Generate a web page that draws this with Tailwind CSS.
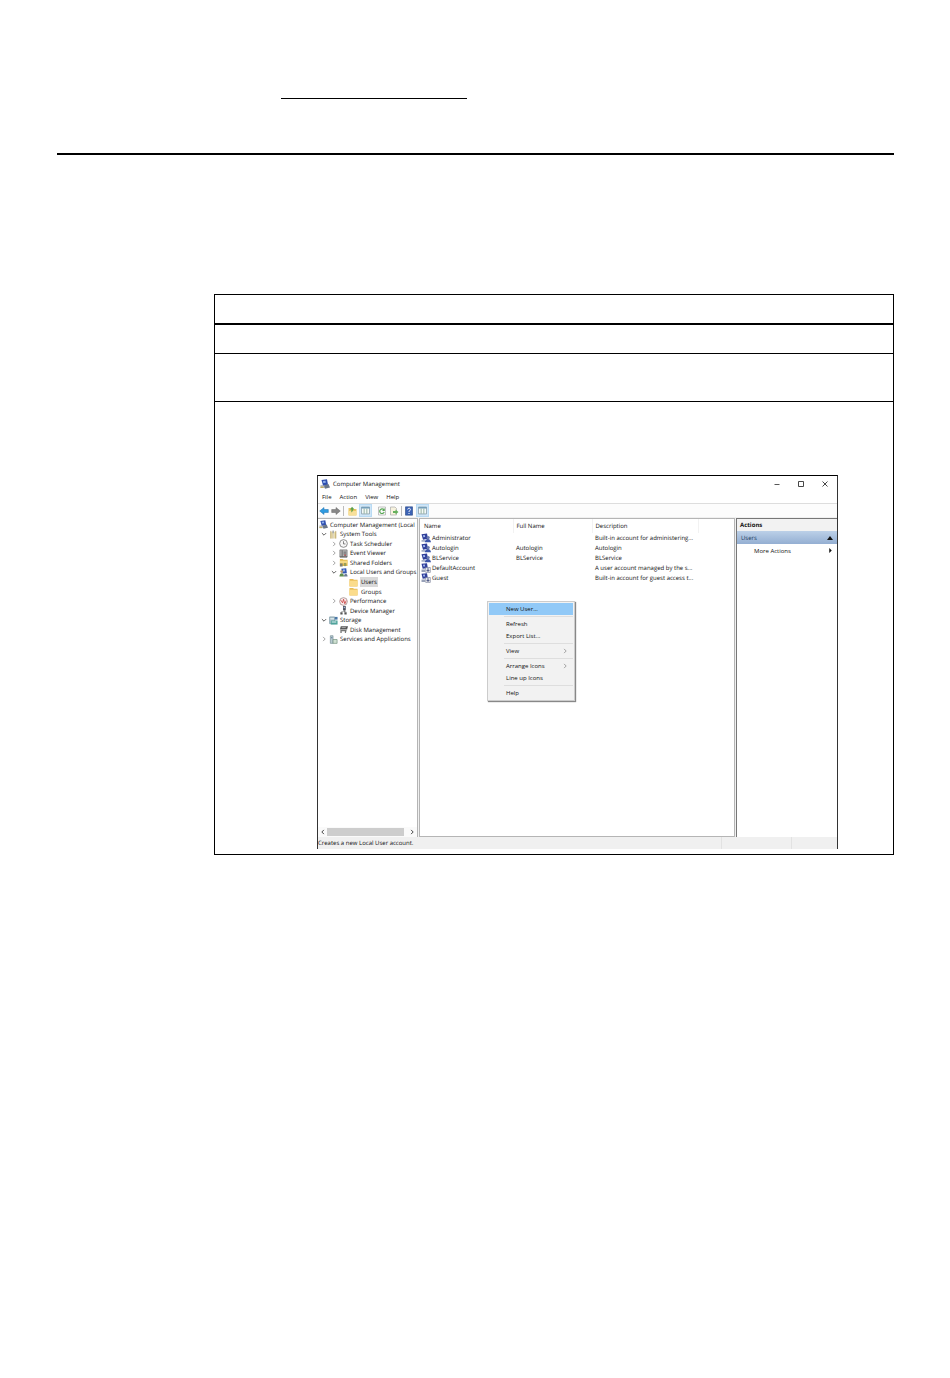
<!DOCTYPE html>
<html lang="en">
<head>
  <meta charset="UTF-8">
  <title>Computer Management</title>
  <script src="https://cdn.jsdelivr.net/npm/@tailwindcss/browser@4"></script>
</head>
<body class="bg-white min-h-screen text-[#111] font-['Open_Sans',sans-serif] text-[6px] leading-[10px] [text-rendering:geometricPrecision]">

  <!-- Shared icons -->
  <svg class="hidden">
    <symbol id="computer" viewBox="0 0 10 10">
      <path fill="#b9bfc9" d="M.5 6h5v3h-5z"/><path fill="#2f4fae" d="M1.500 1L7 .3l1 5.400L3 6.500z"/><path fill="#8fb1ec" d="M3 2l2.500-.3.300 2L3.300 4z"/>
      <path fill="#6a7687" d="M4 6.500l4.500-1.500L10 8.500 5 9.800z"/><path fill="#c5ad5c" d="M.5 7.500h3V9h-3z"/>
    </symbol>
    <symbol id="tools" viewBox="0 0 10 10">
      <path fill="#eadfae" d="M1.500 2h2.500v7.500H1.500zM5.500 2H8v7.500H5.500z"/><path fill="none" stroke="#b3985b" stroke-width=".8" d="M2 1v8.500M4.500 1.500v8M7.500 1v8.500"/><path fill="#8c98a8" d="M4 .5h1.200v3H4z"/>
    </symbol>
    <symbol id="clock" viewBox="0 0 10 10">
      <circle cx="5" cy="5" r="4.300" fill="#f7f7f7" stroke="#777" stroke-width=".9"/><path fill="none" stroke="#555" stroke-width=".8" d="M5 2.500V5.500h2.200"/>
    </symbol>
    <symbol id="event" viewBox="0 0 10 10">
      <path fill="#b6b6b6" stroke="#777" stroke-width=".8" d="M1 1h8v8H1z"/><path fill="none" stroke="#555" stroke-width=".9" d="M3.500 1.500v7M5 3.500h3M5 5.500h3M1 8.700h8"/><path fill="#a44" d="M6 6.200h1.500v1.500H6z"/>
    </symbol>
    <symbol id="shared" viewBox="0 0 10 10">
      <path fill="#e3b94f" d="M1 1h3l1 1h4.500v7H1z"/><path fill="#f5da88" d="M1 3h8.500v3H1z"/><path fill="#7b7f78" d="M1 6h3v3.500H1z"/><path fill="#9a9f58" d="M5.500 5.500H8V9H5.500z"/>
    </symbol>
    <symbol id="folder" viewBox="0 0 10 10">
      <path fill="#e8bd57" d="M.5 1H4.500l1 1h4v7.500h-9z"/><path fill="#fbdc8b" d="M.5 3h9v6.200h-9z"/>
    </symbol>
    <symbol id="groups" viewBox="0 0 10 10">
      <path fill="#3457b4" d="M2.500 .8l5.500-.4.700 5.400L4 6z"/><path fill="#a3c0ef" d="M4.500 1.800h2v2h-2z"/><circle cx="3" cy="4" r="1.500" fill="#b99b72"/><path fill="#5f8f50" d="M.5 9.500c0-5 5-5 5 0z"/><path fill="#6c7d95" d="M5.500 9.500c0-4 4-4 4 0z"/>
    </symbol>
    <symbol id="performance" viewBox="0 0 10 10">
      <circle cx="5" cy="5" r="4.300" fill="#fbeaea" stroke="#9c8585" stroke-width=".8"/><path fill="none" stroke="#c53e3e" stroke-width=".9" d="M2 3.500l2 3 1-4 1.500 5L8 4"/>
    </symbol>
    <symbol id="device" viewBox="0 0 10 10">
      <path fill="#4a4f5c" d="M4.500 0h3v5h-3z"/><path fill="#9fb5d8" d="M5.200 .8h1.500v1.600H5.200z"/><path fill="#777" d="M5.500 4.500h1V7h-1zM2.500 6h5.500v.8H2.500z"/><path fill="#555" d="M1.500 7h2.500v2.500H1.500zM6 7h2.500v2.500H6z"/>
    </symbol>
    <symbol id="storage" viewBox="0 0 10 10">
      <path fill="#b3c5cd" stroke="#6a8b99" stroke-width=".7" d="M.7 1h5.500v7.500H.7z"/><path fill="#4fa39b" d="M2 5h7.500v4.500H2z"/><path fill="#e4f1f4" d="M1.500 2.500h4v1h-4zM3 6.200h5v1H3z"/><path fill="#4977a6" d="M6.500 1h3v3h-3z"/>
    </symbol>
    <symbol id="disk" viewBox="0 0 10 10">
      <path fill="#555" d="M2 1.500h8L9 5H1z"/><path fill="#bbb" d="M3 2.500h4.500v.9H3z"/><path fill="#777" d="M1.500 5.500h7L7.700 9H6.500V7H3v2H1.500z"/>
    </symbol>
    <symbol id="services" viewBox="0 0 10 10">
      <path fill="#b9cbd1" stroke="#718a91" stroke-width=".7" d="M1.500 .8h3v8.500h-3z"/><path fill="#cfe0d2" stroke="#6a8b77" stroke-width=".7" d="M4.500 5h4.500v4.300H4.500z"/><path fill="#5a7698" d="M2.300 2.500h1.400v1H2.300z"/>
    </symbol>
    <symbol id="user" viewBox="0 0 10 10">
      <path fill="#303f9a" d="M.5 1.200L6 .6l1 5.200L2 6.700z"/><path fill="#a9bff0" d="M2 2.300l1.800-.3.300 2-1.700.3z"/><path fill="#a8b2c9" d="M.5 7H4v1.800H.5z"/><circle cx="7.200" cy="4.600" r="1.600" fill="#6b7cae"/><path fill="#3d55a8" d="M3.800 9.300c.5-4.300 5.600-4.300 6.200 0z"/>
    </symbol>
    <symbol id="disabled" viewBox="0 0 10 10">
      <path fill="#303f9a" d="M.5 .8L6 .3l.8 4.700L1.700 5.800z"/><path fill="#a9bff0" d="M2 1.800l1.800-.2.300 1.800-1.700.2z"/><path fill="#98a1b8" d="M.5 6.500H4V9H.5z"/><path fill="#f4f4f4" stroke="#6b7391" stroke-width=".6" d="M4.700 4.500h4.600v4.900H4.700z"/><path fill="none" stroke="#26346e" stroke-width=".9" d="M7 5.200v3M5.700 7L7 8.400 8.300 7"/>
    </symbol>
    <symbol id="panes" viewBox="0 0 10 10">
      <path fill="#f4f8f8" stroke="#7d929f" stroke-width=".8" d="M.5 1.200h9v7.600h-9z"/><path fill="#6e9bb8" d="M.5 1.200h9v1.600h-9z"/><path fill="none" stroke="#7fa38d" stroke-width=".9" d="M3.500 3v5.500M6.500 3v5.500"/>
    </symbol>
    <symbol id="right" viewBox="0 0 10 10"><path fill="none" stroke="#888" stroke-width="1.300" d="M3.500 1.500L7 5 3.500 8.500"/></symbol>
    <symbol id="scroll" viewBox="0 0 10 10"><path fill="none" stroke="#333" stroke-width="1.500" d="M3.500 1.500L7 5 3.500 8.500"/></symbol>
    <symbol id="down" viewBox="0 0 10 10"><path fill="none" stroke="#333" stroke-width="1.300" d="M1.500 3.500L5 7l3.500-3.500"/></symbol>
  </svg>

  <header class="pl-[57px] pr-14 pt-[98px]">
    <div class="ml-[224px] w-[186px] border-t border-black"></div>
    <hr class="mt-[54px] border-t-2 border-black">
  </header>

  <main class="mt-[139px] ml-[214px] mr-14 border border-black">
    <div class="h-7 border-b-2 border-black box-content"></div>
    <div class="h-7 border-b border-black box-content"></div>
    <div class="h-[47px] border-b border-black box-content"></div>

    <div class="pt-[73px] pb-[5px] pl-[102px] pr-[55px]">
      <!-- Computer Management window -->
      <section class="relative border border-b-0 border-[#333] border-t-black bg-white">
        <div class="flex items-center h-[15px] pl-[2px] pr-2">
          <svg class="size-[10px] mr-[3px]"><use href="#computer"/></svg>
          <h1>Computer Management</h1>
          <div class="ml-auto flex gap-[16px]">
            <button type="button" aria-label="Minimize"><svg class="size-2" viewBox="0 0 8 8"><path stroke="#444" stroke-width=".9" d="M1.500 4.500h5"/></svg></button>
            <button type="button" aria-label="Maximize"><svg class="size-2" viewBox="0 0 8 8"><path fill="none" stroke="#333" stroke-width=".9" d="M1.500 1.500h5v5h-5z"/></svg></button>
            <button type="button" aria-label="Close"><svg class="size-2" viewBox="0 0 8 8"><path stroke="#333" stroke-width=".9" d="M1.500 1.500l5 5M6.500 1.500l-5 5"/></svg></button>
          </div>
        </div>

        <nav class="flex items-center gap-2 h-[13px] pl-1 border-b border-[#ddd]">
          <button type="button">File</button>
          <button type="button">Action</button>
          <button type="button">View</button>
          <button type="button">Help</button>
        </nav>

        <div class="flex items-center h-[13px] pl-px bg-[#fcfcfc]">
          <button type="button" aria-label="Back"><svg class="size-[10px]" viewBox="0 0 10 10"><path fill="#2f9be0" stroke="#1d6eae" stroke-width=".5" d="M.7 5L5 1.500v2h4.300v3H5v2z"/></svg></button>
          <button type="button" aria-label="Forward" class="ml-[2px]"><svg class="size-[10px]" viewBox="0 0 10 10"><path fill="#888" stroke="#666" stroke-width=".5" d="M9.300 5L5 1.500v2H.7v3H5v2z"/></svg></button>
          <span class="w-px h-[10px] mx-[2px] bg-[#bbb]"></span>
          <button type="button" aria-label="Up one level" class="ml-px"><svg class="size-[10px]" viewBox="0 0 10 10"><path fill="#eac65f" d="M1.500 2h3l1 1h4v6.500h-8z"/><path fill="#f8e09a" d="M1.500 5h8v4h-8z"/><path fill="#5ba04c" d="M5 .8L7.500 3.500H6c0 2-1 2.500-2 3 .5-1 .5-2 .3-3H3z"/></svg></button>
          <button type="button" aria-label="Console tree" class="ml-[2px] px-px h-[13px] bg-[#cfe6f8] border border-[#b9daf3]"><svg class="size-[9px]"><use href="#panes"/></svg></button>
          <button type="button" aria-label="Refresh" class="ml-[5px]"><svg class="size-[10px]" viewBox="0 0 10 10"><path fill="#fafafa" stroke="#aaa" stroke-width=".7" d="M1.500 1h7v8h-7z"/><path fill="none" stroke="#58a755" stroke-width="1.200" d="M7 4a2.300 2.300 0 1 0 .2 2M7.200 2.500v2H5.500"/></svg></button>
          <button type="button" aria-label="Export list" class="ml-[2px]"><svg class="size-[10px]" viewBox="0 0 10 10"><path fill="#f8f3df" stroke="#aaa" stroke-width=".7" d="M1.500 1H6l1.500 1.500V9h-6z"/><path fill="#65b05c" d="M4 5h2.500V3.500L9.500 6 6.500 8.500V7H4z"/></svg></button>
          <span class="w-px h-[10px] mx-[2px] bg-[#bbb]"></span>
          <button type="button" aria-label="Help"><svg class="size-[10px]" viewBox="0 0 10 10"><path fill="#3b62b5" stroke="#294785" stroke-width=".6" d="M1.500 .8h7v8.400h-7z"/><path fill="none" stroke="#fff" stroke-width="1" d="M3.700 3.500c0-1.700 2.800-1.700 2.700 0C6.400 4.500 5 4.600 5 6M5 7v1"/></svg></button>
          <button type="button" aria-label="Action pane" class="ml-[2px] px-px h-[13px] bg-[#cfe6f8] border border-[#b9daf3]"><svg class="size-[9px]"><use href="#panes"/></svg></button>
        </div>

        <div class="flex h-[320px] pt-px bg-[#f0f0f0]">
          <!-- Console tree -->
          <aside class="flex flex-col w-[100px] pt-px shrink-0 bg-white border-t border-r border-[#b5b5b5]">
            <ul class="grid auto-rows-fr items-center h-[124px] whitespace-nowrap [&>li]:flex [&>li]:items-center [&>li]:gap-[2px]">
              <li class="pl-px"><svg class="size-[9px] shrink-0"><use href="#computer"/></svg>Computer Management (Local</li>
              <li class="pl-[3px]"><svg class="size-[6px]"><use href="#down"/></svg><svg class="size-[9px]"><use href="#tools"/></svg>System Tools</li>
              <li class="pl-[13px]"><svg class="size-[6px]"><use href="#right"/></svg><svg class="size-[9px]"><use href="#clock"/></svg>Task Scheduler</li>
              <li class="pl-[13px]"><svg class="size-[6px]"><use href="#right"/></svg><svg class="size-[9px]"><use href="#event"/></svg>Event Viewer</li>
              <li class="pl-[13px]"><svg class="size-[6px]"><use href="#right"/></svg><svg class="size-[9px]"><use href="#shared"/></svg>Shared Folders</li>
              <li class="pl-[13px]"><svg class="size-[6px]"><use href="#down"/></svg><svg class="size-[9px]"><use href="#groups"/></svg>Local Users and Groups</li>
              <li class="pl-[31px]"><svg class="size-[9px]"><use href="#folder"/></svg><span class="bg-[#d9d9d9] px-px">Users</span></li>
              <li class="pl-[31px]"><svg class="size-[9px]"><use href="#folder"/></svg><span class="px-px">Groups</span></li>
              <li class="pl-[13px]"><svg class="size-[6px]"><use href="#right"/></svg><svg class="size-[9px]"><use href="#performance"/></svg>Performance</li>
              <li class="pl-[21px]"><svg class="size-[9px]"><use href="#device"/></svg>Device Manager</li>
              <li class="pl-[3px]"><svg class="size-[6px]"><use href="#down"/></svg><svg class="size-[9px]"><use href="#storage"/></svg>Storage</li>
              <li class="pl-[21px]"><svg class="size-[9px]"><use href="#disk"/></svg>Disk Management</li>
              <li class="pl-[3px]"><svg class="size-[6px]"><use href="#right"/></svg><svg class="size-[9px]"><use href="#services"/></svg>Services and Applications</li>
            </ul>
            <div class="mt-auto flex items-center h-[10px] px-[2px] gap-px bg-[#fafafa]">
              <svg class="size-[6px] rotate-180"><use href="#scroll"/></svg>
              <span class="h-[8px] w-[77px] bg-[#cdcdcd]"></span>
              <svg class="size-[6px] ml-auto"><use href="#scroll"/></svg>
            </div>
          </aside>

          <!-- User list -->
          <div class="flex-1 ml-px bg-white border border-[#b5b5b5]">
            <table class="w-full table-fixed text-left whitespace-nowrap">
              <thead>
                <tr class="h-[14px]">
                  <th class="w-[93px] pl-1 font-normal border-r border-[#f2f2f2]">Name</th>
                  <th class="w-[79px] pl-[3px] font-normal border-r border-[#f2f2f2]">Full Name</th>
                  <th class="w-[106px] pl-[3px] font-normal border-r border-[#f2f2f2]">Description</th>
                  <th></th>
                </tr>
              </thead>
              <tbody>
                <tr class="h-[10px]">
                  <td class="pl-px"><span class="flex items-center gap-px"><svg class="size-[10px]"><use href="#user"/></svg>Administrator</span></td>
                  <td class="pl-[3px]"></td>
                  <td class="pl-[3px]">Built-in account for administering...</td>
                </tr>
                <tr class="h-[10px]">
                  <td class="pl-px"><span class="flex items-center gap-px"><svg class="size-[10px]"><use href="#user"/></svg>Autologin</span></td>
                  <td class="pl-[3px]">Autologin</td>
                  <td class="pl-[3px]">Autologin</td>
                </tr>
                <tr class="h-[10px]">
                  <td class="pl-px"><span class="flex items-center gap-px"><svg class="size-[10px]"><use href="#user"/></svg>BLService</span></td>
                  <td class="pl-[3px]">BLService</td>
                  <td class="pl-[3px]">BLService</td>
                </tr>
                <tr class="h-[10px]">
                  <td class="pl-px"><span class="flex items-center gap-px"><svg class="size-[10px]"><use href="#disabled"/></svg>DefaultAccount</span></td>
                  <td class="pl-[3px]"></td>
                  <td class="pl-[3px]">A user account managed by the s...</td>
                </tr>
                <tr class="h-[10px]">
                  <td class="pl-px"><span class="flex items-center gap-px"><svg class="size-[10px]"><use href="#disabled"/></svg>Guest</span></td>
                  <td class="pl-[3px]"></td>
                  <td class="pl-[3px]">Built-in account for guest access t...</td>
                </tr>
              </tbody>
            </table>
          </div>

          <!-- Actions pane -->
          <aside class="w-[101px] ml-px shrink-0 bg-white border-t border-l border-[#777]">
            <h2 class="h-[12px] leading-[12px] pl-[3px] font-bold bg-[#f2f2f2]">Actions</h2>
            <div class="flex items-center justify-between h-[13px] pl-1 pr-1 bg-linear-to-b from-[#bcd0e8] to-[#94afd2] text-[#223a5e]">
              Users
              <svg class="size-[6px]" viewBox="0 0 6 6"><path fill="#111" d="M0 5l3-4 3 4z"/></svg>
            </div>
            <button type="button" class="flex items-center justify-between w-full h-[13px] pl-[17px] pr-1">
              More Actions
              <svg class="size-[5px]" viewBox="0 0 6 6"><path fill="#111" d="M1.500 0l3 3-3 3z"/></svg>
            </button>
          </aside>
        </div>

        <footer class="flex h-[12px] leading-[12px] bg-[#f0f0f0]">
          <span class="flex-1">Creates a new Local User account.</span>
          <span class="w-[70px] border-l border-[#e2e2e2]"></span>
          <span class="w-[46px] border-l border-[#e2e2e2]"></span>
        </footer>

        <!-- Context menu -->
        <div class="absolute left-[169px] top-[125px] w-[88px] p-px bg-[#f2f2f2] border border-[#ccc] shadow-[1px_1px_1px_#888] [&>button]:flex [&>button]:items-center [&>button]:justify-between [&>button]:w-full [&>button]:h-3 [&>button]:pl-[17px] [&>button]:pr-[5px] [&>hr]:my-px [&>hr]:ml-[15px] [&>hr]:border-[#dedede]">
          <button type="button" class="bg-[#91c9f7]">New User...</button>
          <hr>
          <button type="button">Refresh</button>
          <button type="button">Export List...</button>
          <hr>
          <button type="button">View <svg class="size-[6px]"><use href="#right"/></svg></button>
          <hr>
          <button type="button">Arrange Icons <svg class="size-[6px]"><use href="#right"/></svg></button>
          <button type="button">Line up Icons</button>
          <hr>
          <button type="button">Help</button>
        </div>
      </section>
    </div>
  </main>

</body>
</html>
